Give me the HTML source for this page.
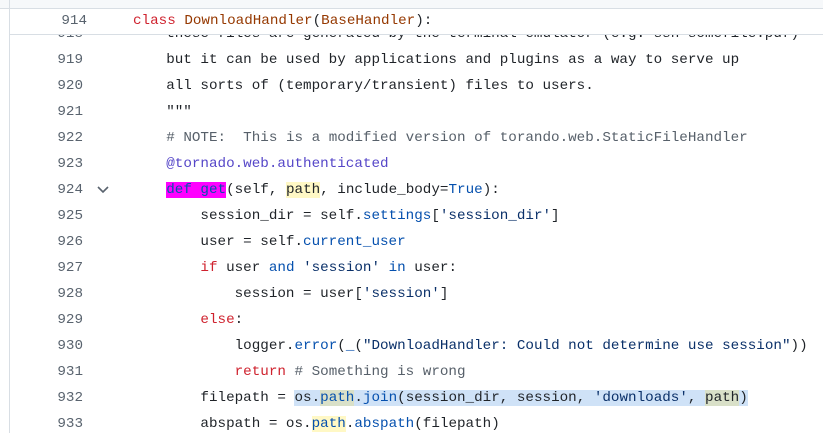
<!DOCTYPE html>
<html><head><style>
html,body{margin:0;padding:0;width:823px;height:433px;overflow:hidden;background:#fff;}
body{font-family:"Liberation Mono",monospace;font-size:14.25px;color:#1f2328;position:relative;}
.top{position:absolute;left:0;top:0;width:823px;height:8px;background:#f6f8fa;border-bottom:1px solid #d8dee4;}
.lb{position:absolute;left:9px;top:0;width:1px;height:433px;background:#d8dee4;}
.hdr{position:absolute;left:10px;top:9px;width:813px;height:25px;background:#fff;border-bottom:1px solid #d8dee4;z-index:3;}
.l{position:absolute;left:0;height:26px;line-height:26px;white-space:pre;width:823px;}
.n{position:absolute;right:740px;color:#59636e;text-align:right;width:60px;}
.c{position:absolute;left:132px;}
.k{color:#cf222e}.s{color:#0a3069}.t{color:#953800}.m{color:#57606a}.b{color:#0550ae}.d{color:#5546c8}
.mg{background:#ff00ff;color:#0550ae}
.y{background:#fff8c5}
.sel{background:#cfe2f7}
.chev{position:absolute;left:96px;top:8px;}
</style></head><body>
<div class="top"></div>
<div class="lb"></div>
<div class="hdr"><div class="l" style="top:0;left:-10px;height:25px;line-height:25px"><span class="n" style="right:736px">914</span><span class="c" style="left:133px"><span class="k">class</span> <span class="t">DownloadHandler</span>(<span class="t">BaseHandler</span>):</span></div></div>
<div class="l" style="top:21px"><span class="n">918</span><span class="c">    these files are generated by the terminal emulator (e.g. ssh somefile.pdf)</span></div>
<div class="l" style="top:47px"><span class="n">919</span><span class="c">    but it can be used by applications and plugins as a way to serve up</span></div>
<div class="l" style="top:73px"><span class="n">920</span><span class="c">    all sorts of (temporary/transient) files to users.</span></div>
<div class="l" style="top:99px"><span class="n">921</span><span class="c">    """</span></div>
<div class="l" style="top:125px"><span class="n">922</span><span class="c">    <span class="m"># NOTE:  This is a modified version of torando.web.StaticFileHandler</span></span></div>
<div class="l" style="top:151px"><span class="n">923</span><span class="c">    <span class="d">@tornado.web.authenticated</span></span></div>
<div class="l" style="top:177px"><span class="n">924</span><svg class="chev" width="14" height="10" viewBox="0 0 14 10"><path d="M2 2 L7 7 L12 2" fill="none" stroke="#59636e" stroke-width="1.6"/></svg><span class="c">    <span class="mg">def get</span>(self, <span class="y">path</span>, include_body=<span class="b">True</span>):</span></div>
<div class="l" style="top:203px"><span class="n">925</span><span class="c">        session_dir = self.<span class="b">settings</span>[<span class="s">'session_dir'</span>]</span></div>
<div class="l" style="top:229px"><span class="n">926</span><span class="c">        user = self.<span class="b">current_user</span></span></div>
<div class="l" style="top:255px"><span class="n">927</span><span class="c">        <span class="k">if</span> user <span class="b">and</span> <span class="s">'session'</span> <span class="b">in</span> user:</span></div>
<div class="l" style="top:281px"><span class="n">928</span><span class="c">            session = user[<span class="s">'session'</span>]</span></div>
<div class="l" style="top:307px"><span class="n">929</span><span class="c">        <span class="k">else</span>:</span></div>
<div class="l" style="top:333px"><span class="n">930</span><span class="c">            logger.<span class="b">error</span>(<span class="b">_</span>(<span class="s">"DownloadHandler: Could not determine use session"</span>))</span></div>
<div class="l" style="top:359px"><span class="n">931</span><span class="c">            <span class="k">return</span> <span class="m"># Something is wrong</span></span></div>
<div class="l" style="top:385px"><span class="n">932</span><span class="c">        filepath = <span class="sel">os.<span class="b y" style="background:#d9e0c8">path</span>.<span class="b">join</span>(session_dir, session, <span class="s">'downloads'</span>, <span style="background:#d9e0c8">path</span>)</span></span></div>
<div class="l" style="top:411px"><span class="n">933</span><span class="c">        abspath = os.<span class="b y">path</span>.<span class="b">abspath</span>(filepath)</span></div>
</body></html>
